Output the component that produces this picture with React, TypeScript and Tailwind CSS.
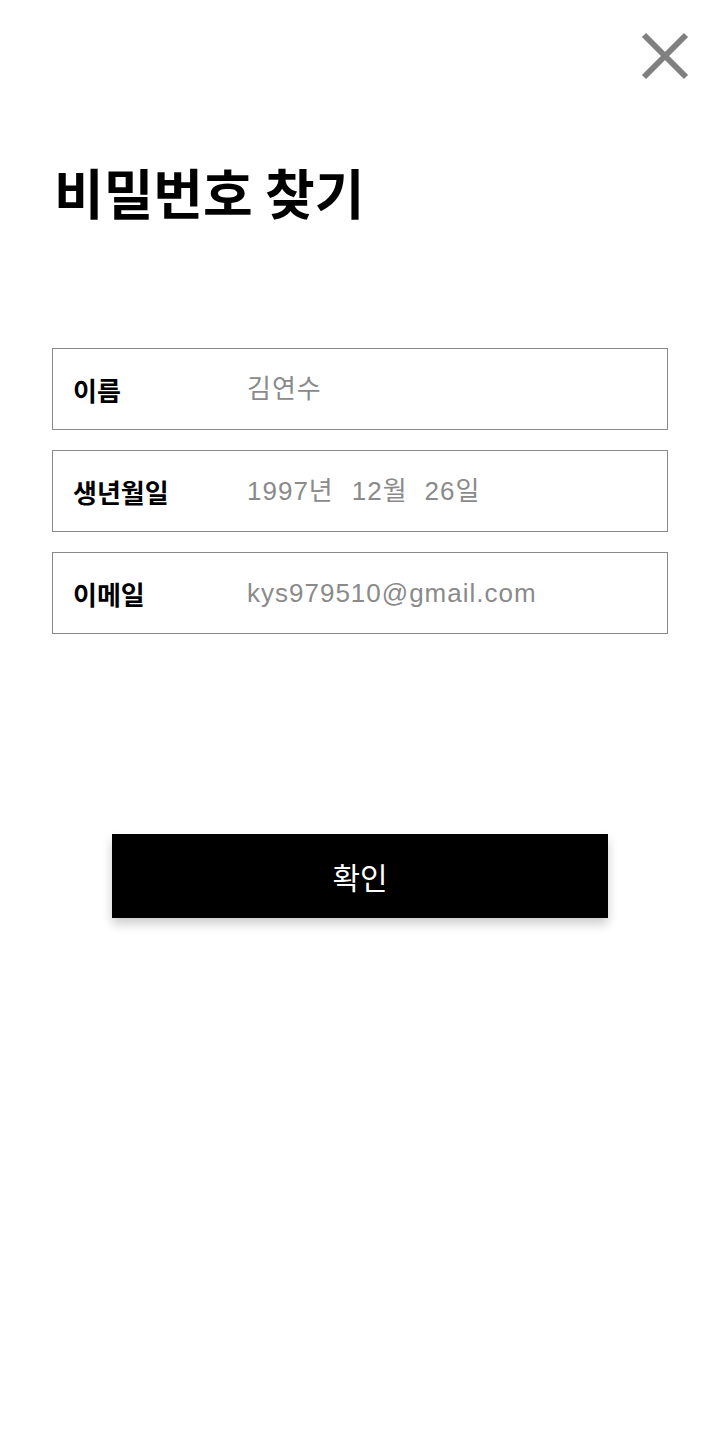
import React from "react";

const font = { fontFamily: '"Noto Sans CJK KR", "Noto Sans", sans-serif' };
const valueFont = { fontFamily: '"Liberation Sans", "Noto Sans CJK KR", sans-serif' };

function Field({ label, children }: { label: string; children: React.ReactNode }) {
  return (
    <div className="flex h-[82px] items-center border border-[#888888] pl-[20px]">
      <div className="w-[174px] text-[26px] font-bold text-black">{label}</div>
      <div className="text-[26px] tracking-[1px] text-[#8a8a8a]" style={valueFont}>{children}</div>
    </div>
  );
}

export default function App() {
  return (
    <div className="relative min-h-[1432px] w-[720px] bg-white" style={font}>
      <button className="absolute right-[31px] top-[32px] h-[48px] w-[48px]" aria-label="close">
        <svg viewBox="0 0 48 48" className="h-[48px] w-[48px]">
          <path d="M3 3 L45 45 M45 3 L3 45" stroke="#808080" strokeWidth="6" strokeLinecap="butt" />
        </svg>
      </button>
      <div className="px-[52px] pt-[154px]">
        <h1 className="pl-[2px] text-[54px] font-bold leading-[76px] text-black">비밀번호 찾기</h1>
        <div className="mt-[118px] flex flex-col gap-[20px]">
          <Field label="이름">김연수</Field>
          <Field label="생년월일">
            <span>1997년</span>
            <span className="ml-[18px]">12월</span>
            <span className="ml-[17px]">26일</span>
          </Field>
          <Field label="이메일">kys979510@gmail.com</Field>
        </div>
        <div className="mt-[200px] flex justify-center">
          <button className="flex h-[84px] w-[496px] items-center justify-center bg-black text-[30px] text-white shadow-[0_6px_10px_rgba(0,0,0,0.2)]">
            확인
          </button>
        </div>
      </div>
    </div>
  );
}
